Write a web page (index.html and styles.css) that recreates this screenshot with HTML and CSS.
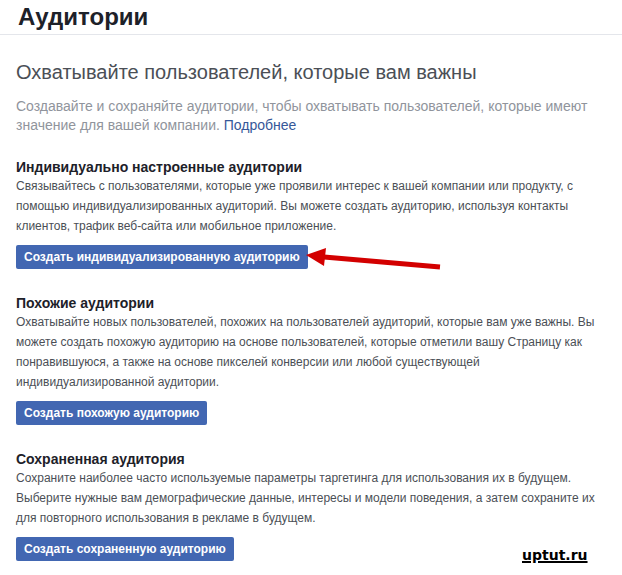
FILE: index.html
```html
<!DOCTYPE html>
<html lang="ru">
<head>
<meta charset="utf-8">
<title>Аудитории</title>
<link rel="stylesheet" href="styles.css">
</head>
<body>
<header class="page-header">
  <h1 class="page-title">Аудитории</h1>
</header>
<main class="content">
  <h2 class="lead-title">Охватывайте пользователей, которые вам важны</h2>
  <p class="lead-text">Создавайте и сохраняйте аудитории, чтобы охватывать пользователей, которые имеют значение для вашей компании. <a class="link" href="#">Подробнее</a></p>

  <section class="block">
    <h3 class="block-title">Индивидуально настроенные аудитории</h3>
    <p class="block-text">Связывайтесь с пользователями, которые уже проявили интерес к вашей компании или продукту, с помощью индивидуализированных аудиторий. Вы можете создать аудиторию, используя контакты клиентов, трафик веб-сайта или мобильное приложение.</p>
    <button class="btn">Создать индивидуализированную аудиторию</button>
  </section>

  <section class="block">
    <h3 class="block-title">Похожие аудитории</h3>
    <p class="block-text">Охватывайте новых пользователей, похожих на пользователей аудиторий, которые вам уже важны. Вы можете создать похожую аудиторию на основе пользователей, которые отметили вашу Страницу как понравившуюся, а также на основе пикселей конверсии или любой существующей индивидуализированной аудитории.</p>
    <button class="btn">Создать похожую аудиторию</button>
  </section>

  <section class="block">
    <h3 class="block-title">Сохраненная аудитория</h3>
    <p class="block-text">Сохраните наиболее часто используемые параметры таргетинга для использования их в будущем. Выберите нужные вам демографические данные, интересы и модели поведения, а затем сохраните их для повторного использования в рекламе в будущем.</p>
    <button class="btn">Создать сохраненную аудиторию</button>
  </section>
</main>

<svg class="arrow" width="140" height="24" viewBox="0 0 140 24" aria-hidden="true">
  <line x1="18" y1="9" x2="134" y2="19" stroke="#d30000" stroke-width="5" stroke-linecap="butt"/>
  <polygon points="0,7 20,0 18,18" fill="#d30000"/>
</svg>

<a class="watermark" href="#">uptut.ru</a>
</body>
</html>
```
FILE: styles.css
```css
html, body {
  margin: 0;
  padding: 0;
  background: #ffffff;
}

body {
  position: relative;
  width: 622px;
  height: 575px;
  overflow: hidden;
  font-family: "Liberation Sans", Arial, sans-serif;
  color: #4b4f56;
}

.page-header {
  height: 35px;
  border-bottom: 1px solid #e4e6eb;
  padding: 0 18px;
  box-sizing: border-box;
}

.page-title {
  margin: 0;
  padding-top: 3px;
  font-size: 24px;
  line-height: 28px;
  font-weight: bold;
  color: #1d2129;
}

.content {
  padding: 0 16px;
}

.lead-title {
  margin: 24px 0 0;
  font-size: 20px;
  line-height: 26px;
  font-weight: normal;
  color: #4b4f56;
}

.lead-text {
  margin: 12px 0 0;
  font-size: 14px;
  line-height: 19px;
  color: #90949c;
}

.link {
  color: #365899;
  text-decoration: none;
}

.block {
  margin-top: 23px;
}

.block + .block {
  margin-top: 25px;
}

.block-title {
  margin: 0;
  font-size: 14px;
  line-height: 18px;
  font-weight: bold;
  color: #1d2129;
}

.block-text {
  margin: 0;
  font-size: 12px;
  line-height: 20px;
  color: #4b4f56;
}

.btn {
  display: block;
  margin-top: 9px;
  height: 24px;
  padding: 0 8px;
  border: 0;
  border-radius: 2px;
  background: #4267b2;
  color: #ffffff;
  font-family: "Liberation Sans", Arial, sans-serif;
  font-size: 12px;
  font-weight: bold;
  line-height: 24px;
}

.arrow {
  position: absolute;
  left: 306px;
  top: 248px;
}

.watermark {
  position: absolute;
  left: 522px;
  top: 547px;
  font-family: "DejaVu Sans", Verdana, sans-serif;
  font-size: 14px;
  font-weight: bold;
  color: #000000;
  text-decoration: underline;
  text-decoration-thickness: 2px;
}
```
